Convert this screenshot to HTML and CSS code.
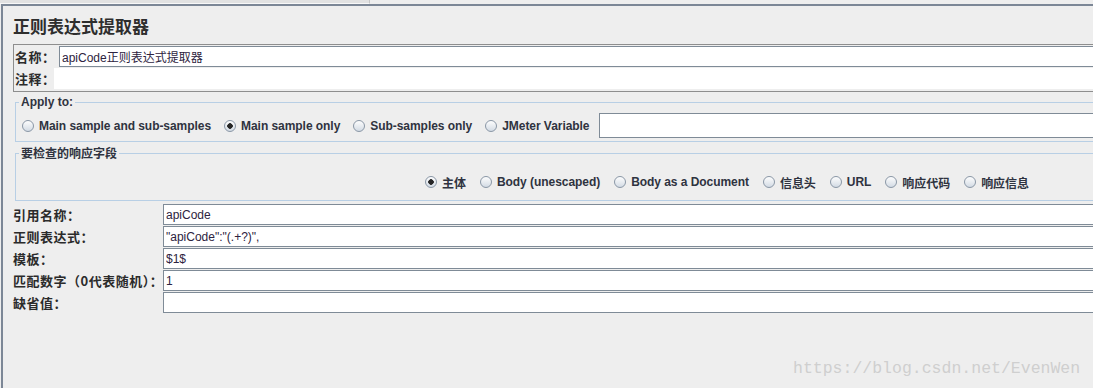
FILE: index.html
```html
<!DOCTYPE html>
<html lang="zh-CN">
<head>
    <meta charset="UTF-8">
    <title>正则表达式提取器</title>
    <link rel="stylesheet" href="styles.css">
</head>
<body>

    <div class="tabs"></div>

    <div class="frame">
        <div class="panel">

            <h1 class="title">正则表达式提取器</h1>

            <div class="name-box">
                <div class="name-row">
                    <label class="lbl name-lbl">名称：</label>
                    <input class="field" type="text" value="apiCode正则表达式提取器">
                </div>
                <div class="name-row">
                    <label class="lbl comment-lbl">注释：</label>
                    <input class="field plain" type="text">
                </div>
            </div>

            <fieldset class="group apply">
                <legend>Apply to:</legend>
                <div class="radio-row">
                    <label class="opt"><input type="radio" name="scope">Main sample and sub-samples</label>
                    <label class="opt"><input type="radio" name="scope" checked>Main sample only</label>
                    <label class="opt"><input type="radio" name="scope">Sub-samples only</label>
                    <label class="opt"><input type="radio" name="scope">JMeter Variable</label>
                    <input class="field var-field" type="text">
                </div>
            </fieldset>

            <fieldset class="group check">
                <legend>要检查的响应字段</legend>
                <div class="radio-row centered">
                    <label class="opt"><input type="radio" name="field" checked>主体</label>
                    <label class="opt"><input type="radio" name="field">Body (unescaped)</label>
                    <label class="opt"><input type="radio" name="field">Body as a Document</label>
                    <label class="opt"><input type="radio" name="field">信息头</label>
                    <label class="opt"><input type="radio" name="field">URL</label>
                    <label class="opt"><input type="radio" name="field">响应代码</label>
                    <label class="opt"><input type="radio" name="field">响应信息</label>
                </div>
            </fieldset>

            <div class="form-grid">
                <label class="lbl">引用名称：</label>
                <input class="field" type="text" value="apiCode">

                <label class="lbl">正则表达式：</label>
                <input class="field" type="text" value="&quot;apiCode&quot;:&quot;(.+?)&quot;,">

                <label class="lbl">模板：</label>
                <input class="field" type="text" value="$1$">

                <label class="lbl">匹配数字（0代表随机）：</label>
                <input class="field" type="text" value="1">

                <label class="lbl">缺省值：</label>
                <input class="field" type="text">
            </div>

        </div>
    </div>

    <div class="watermark">https://blog.csdn.net/EvenWen</div>

</body>
</html>
```

FILE: styles.css
```css
html, body{
  height: 100%;
}

body{
  margin: 0;
  background: #eeeeee;
  color: #333333;
  font-family: 'Liberation Sans', 'Noto Sans CJK SC', sans-serif;
  font-size: 12px;
  overflow: hidden;
  position: relative;
}

.tabs{
  width: 369px;
  height: 3px;
  background: #e2e2e2;
  border-bottom: 1px solid #f8f8f8;
  border-right: 1px solid #c6c6c6;
}

.frame{
  margin-left: 1px;
  height: calc(100% - 4px);
  border-left: 2px solid #7c8796;
  border-top: 2px solid #7c8796;
}

.panel{
  width: 1433px;
  padding-left: 10px;
}

.title{
  margin: 8px 0 6px 0;
  font-family: 'Noto Sans CJK SC', sans-serif;
  font-size: 17px;
  line-height: 24px;
  font-weight: bold;
  color: #2e2e2e;
}

/* name / comment box */
.name-box{
  border: 1px solid #8e8e8e;
  border-right: none;
  padding: 1px 0 2px 1px;
}

.name-row{
  display: flex;
  align-items: center;
  height: 21px;
}

.name-row + .name-row{
  margin-top: 1px;
}

.lbl{
  font-family: 'Noto Sans CJK TC', 'Noto Sans CJK SC', sans-serif;
  font-weight: bold;
  font-size: 13px;
  letter-spacing: 0.5px;
  line-height: 16px;
  color: #2b2b2b;
  white-space: nowrap;
}

.name-lbl{
  width: 44px;
}

.comment-lbl{
  width: 39px;
}

.field{
  flex: 1;
  box-sizing: border-box;
  height: 21px;
  margin: 0;
  padding: 0 2px;
  border: 1px solid #7f8b97;
  background: white;
  font-family: 'Liberation Sans', 'Noto Sans CJK SC', sans-serif;
  font-size: 12px;
  color: #2d2340;
  outline: none;
}

.field.plain{
  border: none;
}

/* titled groups */
.group{
  margin: 0 0 0 2px;
  padding: 4px 0 3px 6px;
  border: 1px solid #b8cfe5;
  border-right: none;
}

.group legend{
  margin-left: -3px;
  padding: 0 2px;
  font-weight: bold;
  font-size: 12px;
  line-height: 14px;
  color: #2f3340;
}

.apply{
  margin-top: 3px;
}

.check{
  margin-top: 4px;
  padding: 14px 0 10px 6px;
}

.check legend{
  font-family: 'Noto Sans CJK SC', sans-serif;
}

.radio-row{
  display: flex;
  align-items: center;
  height: 16px;
}

.apply .radio-row{
  height: 25px;
}

.radio-row.centered{
  justify-content: center;
}

.opt{
  display: flex;
  align-items: center;
  font-weight: bold;
  font-size: 12px;
  letter-spacing: -0.05px;
  color: #2f3340;
  white-space: nowrap;
  margin-right: 13px;
}

.centered .opt{
  margin-right: 14px;
}

.opt input{
  appearance: none;
  -webkit-appearance: none;
  box-sizing: border-box;
  width: 12px;
  height: 12px;
  margin: 0 5px 0 0;
  border: 1px solid #8a97a6;
  border-radius: 50%;
  background: linear-gradient(#fdfdfd, #d3dbe4);
}

.opt input:checked{
  background: radial-gradient(circle, #262626 0 2.5px, transparent 3px), linear-gradient(#fdfdfd, #d3dbe4);
}

.var-field{
  height: 25px;
  margin-left: -4px;
}

/* bottom form */
.form-grid{
  display: grid;
  grid-template-columns: 150px 1fr;
  grid-auto-rows: 21px;
  row-gap: 1px;
  align-items: center;
  margin-top: 3px;
}

.form-grid .field{
  height: 21px;
}

.watermark{
  position: absolute;
  left: 793px;
  top: 359px;
  font-family: 'Liberation Mono', monospace;
  font-size: 16.5px;
  color: #cfcfcf;
}
```
